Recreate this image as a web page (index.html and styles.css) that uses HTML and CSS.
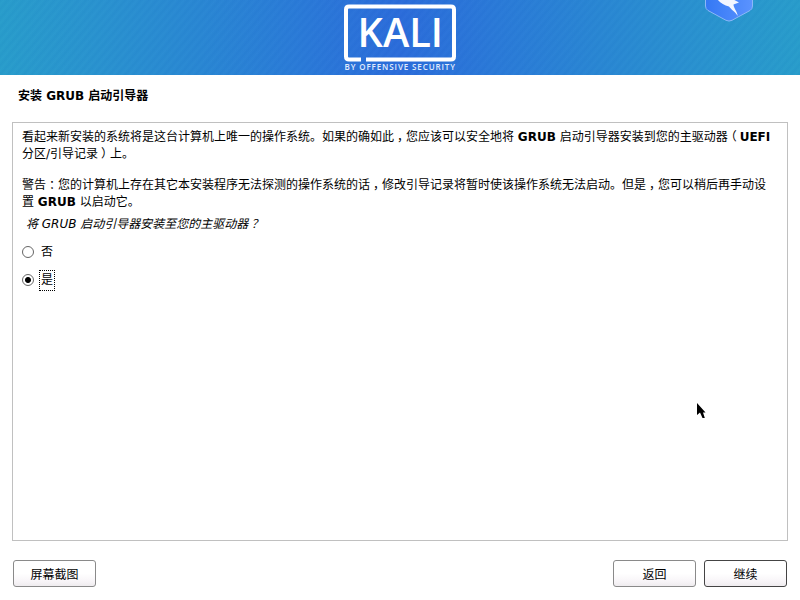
FILE: index.html
```
<!DOCTYPE html>
<html lang="zh-CN">
<head>
    <meta charset="UTF-8">
    <title>安装 GRUB 启动引导器</title>
    <link rel="stylesheet" href="styles.css">
</head>
<body>

    <!-- Banner -->
    <header class="banner">
        <svg class="logo" width="130" height="75" viewBox="335 0 130 75">
            <path class="logo-frame" d="M361 59.500H349Q346 59.500 346 56.500V9.500Q346 6.500 349 6.500H451Q454 6.500 454 9.500V56.500Q454 59.500 451 59.500H366"/>
            <text class="logo-name" x="357.500" y="47" textLength="85.500" lengthAdjust="spacingAndGlyphs">KALI</text>
            <text class="logo-by" x="344.500" y="70.200" textLength="110.500">BY OFFENSIVE SECURITY</text>
        </svg>
        <svg class="badge" width="50" height="22" viewBox="704 0 50 22">
            <defs>
                <linearGradient id="badgeFill" x1="0" y1="0" x2="1" y2="0">
                    <stop offset="0" stop-color="#3478f4"/>
                    <stop offset="1" stop-color="#5b93ff"/>
                </linearGradient>
            </defs>
            <path d="M705.500 -4V6Q705.500 9 708 10.500L726 20.300Q729 21.800 732 20.300L750 10.500Q752.500 9 752.500 6V-4Z" fill="url(#badgeFill)" stroke="#8bb8f7" stroke-width="1"/>
            <path d="M717 -1C720 2.500 724 5.500 729 6.500C731 9.500 735 11.500 737.800 16C737 11 733.500 8 733.500 4.500L739 2.500L732.500 -1Z" fill="#f2f6ff"/>
        </svg>
    </header>

    <h1 class="title">安装 GRUB 启动引导器</h1>

    <!-- Question -->
    <main class="panel">
        <p>看起来新安装的系统将是这台计算机上唯一的操作系统。如果的确如此<span class="mid">，</span>您应该可以安全地将 <b>GRUB</b> 启动引导器安装到您的主驱动器<span class="mid">（</span><b>UEFI</b><br>分区/引导记录<span class="mid">）</span>上。</p>
        <p>警告<span class="mid">：</span>您的计算机上存在其它本安装程序无法探测的操作系统的话<span class="mid">，</span>修改引导记录将暂时使该操作系统无法启动。但是<span class="mid">，</span>您可以稍后再手动设<br>置 <b>GRUB</b> 以启动它。</p>
        <p class="question">将 GRUB 启动引导器安装至您的主驱动器<span class="mark">？</span></p>

        <label class="option">
            <input type="radio" name="grub" value="no">
            <span>否</span>
        </label>
        <label class="option">
            <input type="radio" name="grub" value="yes" checked>
            <span class="focused">是</span>
        </label>
    </main>

    <!-- Buttons -->
    <footer class="actions">
        <button class="btn screenshot">屏幕截图</button>
        <button class="btn">返回</button>
        <button class="btn default">继续</button>
    </footer>

    <svg class="cursor" width="10" height="16" viewBox="0 0 10 16">
        <path d="M0 0V12L3 9.500L5.500 15H7.800L6 9.500H8.500Z"/>
    </svg>

</body>
</html>
```

FILE: styles.css
```
* {
    box-sizing: border-box;
}

body {
    margin: 0;
    width: 800px;
    height: 600px;
    overflow: hidden;
    display: flex;
    flex-direction: column;
    position: relative;
    background-color: #fff;
    color: #000;
    font-family: "DejaVu Sans", "Noto Sans CJK SC", sans-serif;
    font-size: 12px;
    line-height: 17px;
}

.banner {
    height: 75px;
    flex: none;
    position: relative;
    display: flex;
    justify-content: center;
    background:
        repeating-linear-gradient(130deg, rgba(0, 50, 150, 0.035) 0, rgba(255, 255, 255, 0.01) 3px, rgba(0, 50, 150, 0.035) 6px),
        linear-gradient(90deg, #289dcb 0%, #2993cf 12%, #2987d3 25%, #2a7ad8 38%, #2b6cda 50%, #2a7ad8 62%, #2987d3 75%, #2993cf 88%, #289dcb 100%);
}

.logo {
    display: block;
}

.logo-frame {
    fill: none;
    stroke: #fff;
    stroke-width: 4;
}

.logo-name {
    fill: #fff;
    font-family: "Open Sans", sans-serif;
    font-size: 39px;
    font-weight: 600;
}

.logo-by {
    fill: #e0ebfc;
    font-family: "Open Sans", sans-serif;
    font-size: 8px;
    font-weight: 600;
}

.badge {
    position: absolute;
    top: 0;
    left: 704px;
}

.title {
    margin: 12px 18px 17px;
    height: 18px;
    font-size: 12px;
    line-height: 18px;
    font-weight: bold;
}

.panel {
    height: 419px;
    flex: none;
    margin: 0 12px;
    padding: 6px 9px;
    border: 1px solid #c0c0c0;
}

.panel p {
    margin: 0 0 14px;
    white-space: nowrap;
}

.panel p.question {
    margin: -9px 0 9px 4px;
    font-style: italic;
}

/* punctuation sits in the middle of its cell */
.mid {
    display: inline-block;
    width: 12px;
    text-align: center;
    font-family: "Noto Sans CJK SC", sans-serif;
    font-feature-settings: "halt";
    line-height: 1;
}

.mark {
    padding-left: 3px;
}

.option {
    display: flex;
    align-items: center;
    height: 20px;
    margin-bottom: 8px;
}

.option input {
    appearance: none;
    width: 12px;
    height: 12px;
    margin: 0 5px 0 0;
    border: 1px solid #666;
    border-radius: 50%;
    background-color: #fff;
}

.option input:checked {
    background: radial-gradient(circle, #000 2.500px, #fff 3.500px);
}

.option span {
    padding: 1px;
    border: 1px solid transparent;
}

.option .focused {
    border: 1px dotted #000;
}

.actions {
    display: flex;
    gap: 8px;
    padding: 19px 13px 0;
}

.btn {
    width: 83px;
    height: 27px;
    padding: 0;
    border: 1px solid #8a8a8a;
    border-radius: 3px;
    background: linear-gradient(#fff 50%, #f8f5f8 80%, #efecef);
    color: #000;
    font-family: inherit;
    font-size: 12px;
}

.btn.screenshot {
    margin-right: auto;
}

.btn.default {
    border-color: #444;
}

.cursor {
    position: absolute;
    left: 697px;
    top: 403px;
}
```
